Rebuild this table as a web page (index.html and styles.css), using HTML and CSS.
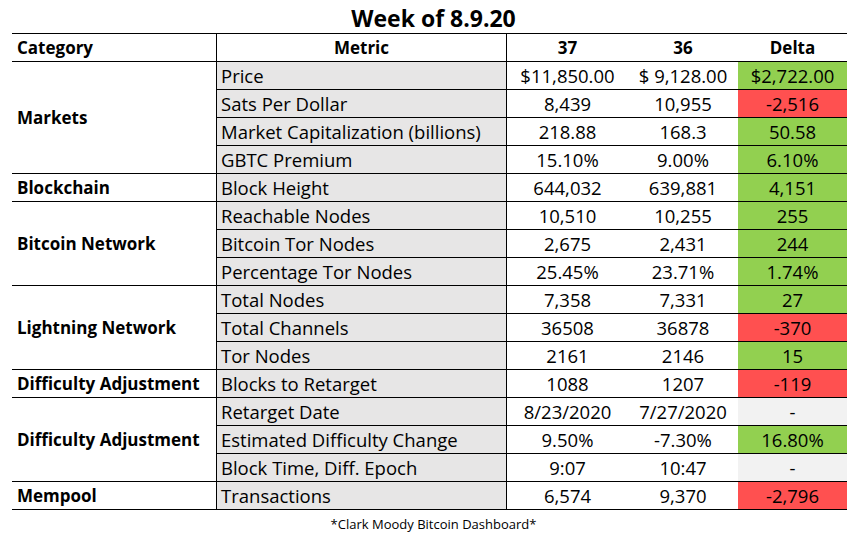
FILE: index.html
```html
<!DOCTYPE html>
<html>
<head>
<meta charset="utf-8">
<link rel="stylesheet" href="styles.css">
</head>
<body>
<div class="page">
  <h1 class="title">Week of 8.9.20</h1>
  <table class="sheet">
    <colgroup>
      <col class="c-cat"><col class="c-metric"><col class="c-w37"><col class="c-w36"><col class="c-delta">
    </colgroup>
    <thead>
      <tr>
        <th class="cat">Category</th>
        <th class="metric-h">Metric</th>
        <th class="num sep">37</th>
        <th class="num">36</th>
        <th class="num">Delta</th>
      </tr>
    </thead>
    <tbody>
      <tr>
        <td class="cat" rowspan="4">Markets</td>
        <td class="metric">Price</td>
        <td class="num sep">$11,850.00</td>
        <td class="num">$ 9,128.00</td>
        <td class="num up">$2,722.00</td>
      </tr>
      <tr>
        <td class="metric">Sats Per Dollar</td>
        <td class="num sep">8,439</td>
        <td class="num">10,955</td>
        <td class="num down">-2,516</td>
      </tr>
      <tr>
        <td class="metric">Market Capitalization (billions)</td>
        <td class="num sep">218.88</td>
        <td class="num">168.3</td>
        <td class="num up">50.58</td>
      </tr>
      <tr>
        <td class="metric">GBTC Premium</td>
        <td class="num sep">15.10%</td>
        <td class="num">9.00%</td>
        <td class="num up">6.10%</td>
      </tr>
      <tr>
        <td class="cat">Blockchain</td>
        <td class="metric">Block Height</td>
        <td class="num sep">644,032</td>
        <td class="num">639,881</td>
        <td class="num up">4,151</td>
      </tr>
      <tr>
        <td class="cat" rowspan="3">Bitcoin Network</td>
        <td class="metric">Reachable Nodes</td>
        <td class="num sep">10,510</td>
        <td class="num">10,255</td>
        <td class="num up">255</td>
      </tr>
      <tr>
        <td class="metric">Bitcoin Tor Nodes</td>
        <td class="num sep">2,675</td>
        <td class="num">2,431</td>
        <td class="num up">244</td>
      </tr>
      <tr>
        <td class="metric">Percentage Tor Nodes</td>
        <td class="num sep">25.45%</td>
        <td class="num">23.71%</td>
        <td class="num up">1.74%</td>
      </tr>
      <tr>
        <td class="cat" rowspan="3">Lightning Network</td>
        <td class="metric">Total Nodes</td>
        <td class="num sep">7,358</td>
        <td class="num">7,331</td>
        <td class="num up">27</td>
      </tr>
      <tr>
        <td class="metric">Total Channels</td>
        <td class="num sep">36508</td>
        <td class="num">36878</td>
        <td class="num down">-370</td>
      </tr>
      <tr>
        <td class="metric">Tor Nodes</td>
        <td class="num sep">2161</td>
        <td class="num">2146</td>
        <td class="num up">15</td>
      </tr>
      <tr>
        <td class="cat">Difficulty Adjustment</td>
        <td class="metric">Blocks to Retarget</td>
        <td class="num sep">1088</td>
        <td class="num">1207</td>
        <td class="num down">-119</td>
      </tr>
      <tr>
        <td class="cat" rowspan="3">Difficulty Adjustment</td>
        <td class="metric">Retarget Date</td>
        <td class="num sep">8/23/2020</td>
        <td class="num">7/27/2020</td>
        <td class="num flat">-</td>
      </tr>
      <tr>
        <td class="metric">Estimated Difficulty Change</td>
        <td class="num sep">9.50%</td>
        <td class="num">-7.30%</td>
        <td class="num up">16.80%</td>
      </tr>
      <tr>
        <td class="metric">Block Time, Diff. Epoch</td>
        <td class="num sep">9:07</td>
        <td class="num">10:47</td>
        <td class="num flat">-</td>
      </tr>
      <tr>
        <td class="cat">Mempool</td>
        <td class="metric">Transactions</td>
        <td class="num sep">6,574</td>
        <td class="num">9,370</td>
        <td class="num down">-2,796</td>
      </tr>
    </tbody>
  </table>
  <p class="source">*Clark Moody Bitcoin Dashboard*</p>
</div>
</body>
</html>
```

FILE: styles.css
```css
html, body {
  margin: 0;
  padding: 0;
  background: #ffffff;
}

.page {
  width: 867px;
  height: 540px;
  font-family: "Open Sans", Lato, "Liberation Sans", sans-serif;
  color: #000;
}

.title {
  margin: 0;
  height: 33px;
  line-height: 36px;
  text-align: center;
  font-size: 23px;
  font-weight: 700;
}

.sheet {
  margin-left: 12px;
  width: 835px;
  table-layout: fixed;
  border-collapse: separate;
  border-spacing: 0;
  border-top: 1px solid #000;
  font-size: 18.5px;
}

.c-cat { width: 204px; }
.c-metric { width: 290px; }
.c-w37 { width: 122px; }
.c-w36 { width: 110px; }
.c-delta { width: 109px; }

.sheet th,
.sheet td {
  box-sizing: border-box;
  height: 28px;
  padding: 1px 0 0;
  border-bottom: 1px solid #000;
  white-space: nowrap;
  overflow: hidden;
  vertical-align: middle;
  line-height: 26px;
}

.sheet th {
  font-weight: 700;
  font-size: 17px;
}

.sheet .cat {
  text-align: left;
  padding-left: 5px;
  font-weight: 700;
  font-size: 17px;
}

.metric-h {
  border-left: 1px solid #000;
  text-align: center;
}

.metric {
  border-left: 1px solid #000;
  padding-left: 4px !important;
  background: #e7e6e6;
  text-align: left;
}

.num {
  text-align: center;
}

.sep {
  border-left: 1px solid #000;
}

.up { background: #92d050; }
.down { background: #ff5050; }
.flat { background: #f2f2f2; }

.source {
  margin: 5px 0 0;
  text-align: center;
  font-size: 13px;
}
```
